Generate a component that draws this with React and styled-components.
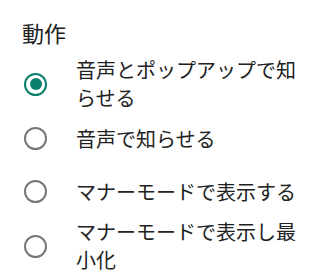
import styled, { createGlobalStyle } from "styled-components";

const options = [
  { label: "音声とポップアップで知らせる", checked: true },
  { label: "音声で知らせる" },
  { label: "マナーモードで表示する" },
  { label: "マナーモードで表示し最小化" },
];

const App = () => (
  <>
    <GlobalStyle />
    <Panel>
      <Title>動作</Title>
      <List>
        {options.map((option) => (
          <Option key={option.label}>
            <Radio checked={option.checked} />
            <Label>{option.label}</Label>
          </Option>
        ))}
      </List>
    </Panel>
  </>
);

const GlobalStyle = createGlobalStyle`
  body {
    margin: 0;
    background: #ffffff;
    font-family: "Noto Sans CJK JP", "Noto Sans", sans-serif;
    color: #212121;
  }
`;

const Panel = styled.div`
  width: 335px;
  height: 277px;
  padding: 16px 0 0 22px;
  box-sizing: border-box;
  overflow: hidden;
`;

const Title = styled.h2`
  margin: 0 0 8px;
  font-size: 22px;
  font-weight: 400;
  line-height: 32px;
`;

const List = styled.div`
  display: flex;
  flex-direction: column;
`;

const Option = styled.div`
  display: flex;
  align-items: center;
  min-height: 53px;
`;

const Radio = styled.span`
  position: relative;
  flex: none;
  width: 23px;
  height: 23px;
  margin-left: 2px;
  box-sizing: border-box;
  border-radius: 50%;
  border: 2.5px solid ${({ checked }) => (checked ? "#0a7f6c" : "#767676")};

  &::after {
    content: "";
    position: absolute;
    inset: 3.5px;
    border-radius: 50%;
    background: #0a7f6c;
    display: ${({ checked }) => (checked ? "block" : "none")};
  }
`;

const Label = styled.div`
  margin-left: 29px;
  max-width: 228px;
  font-size: 20px;
  line-height: 28px;
`;

export default App;
